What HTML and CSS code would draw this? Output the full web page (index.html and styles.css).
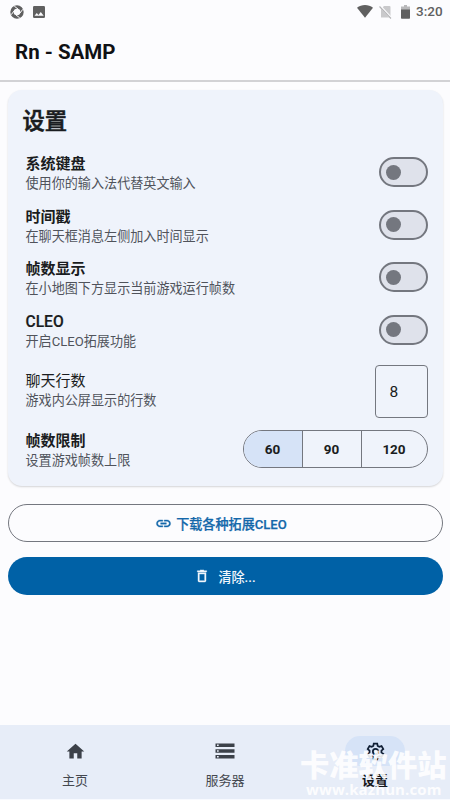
FILE: index.html
```html
<!DOCTYPE html>
<html lang="zh-CN">
<head>
<meta charset="utf-8">
<title>Rn - SAMP</title>
<link rel="stylesheet" href="styles.css">
</head>
<body>
<div class="screen">
  <div class="status">
    <svg class="sync" width="14" height="14" viewBox="0 0 14 14"><circle cx="7" cy="7" r="5" fill="none" stroke="#606060" stroke-width="3.4"/><path d="M4.3 1.2 8 4M12.8 4.3 10 8M9.7 12.8 6 10M1.2 9.7 4 6" stroke="#fcfcfe" stroke-width="1"/></svg>
    <svg class="photo" width="12" height="12" viewBox="0 0 12 12"><rect width="12" height="12" rx="1.2" fill="#606060"/><path d="M1.5 9.8 3.8 7l1.6 1.9L7.8 6l2.9 3.8z" fill="#fcfcfe"/></svg>
    <span class="grow"></span>
    <svg class="wifi" width="16" height="13" viewBox="0 0 16 13"><path d="M0 2.8C4.5-.9 11.500-.9 16 2.800L8 12.800z" fill="#606060"/></svg>
    <svg class="sim" width="13" height="14" viewBox="0 0 13 14"><path d="M5 1h5.500a1 1 0 0 1 1 1v10.500H2V4z" fill="#c9c9cb"/><path d="M1 1 12.500 13.500" stroke="#fcfcfe" stroke-width="2.400"/><path d="M.5 1.500 12 13.500" stroke="#b4b4b6" stroke-width="1.100"/></svg>
    <svg class="battery" width="9" height="14" viewBox="0 0 9 14"><path d="M3 0h3v1.500h3V5H0V1.500h3z" fill="#b8b8ba"/><path d="M0 4.500h9V13a.8.8 0 0 1-.8.8H.8A.8.8 0 0 1 0 13z" fill="#606060"/></svg>
    <span class="clock">3:20</span>
  </div>
  <header class="appbar">Rn - SAMP</header>
  <main>
    <section class="card">
      <h2>设置</h2>
      <div class="row"><div class="text"><div class="name">系统键盘</div><div class="desc">使用你的输入法代替英文输入</div></div><span class="switch"></span></div>
      <div class="row"><div class="text"><div class="name">时间戳</div><div class="desc">在聊天框消息左侧加入时间显示</div></div><span class="switch"></span></div>
      <div class="row"><div class="text"><div class="name">帧数显示</div><div class="desc">在小地图下方显示当前游戏运行帧数</div></div><span class="switch"></span></div>
      <div class="row"><div class="text"><div class="name latin">CLEO</div><div class="desc">开启CLEO拓展功能</div></div><span class="switch"></span></div>
      <div class="row lines"><div><div class="name plain">聊天行数</div><div class="desc">游戏内公屏显示的行数</div></div><span class="field">8</span></div>
      <div class="row limit"><div class="text"><div class="name">帧数限制</div><div class="desc">设置游戏帧数上限</div></div>
        <div class="segments"><span class="on">60</span><span>90</span><span>120</span></div></div>
    </section>
    <div class="button outline">
      <svg width="17" height="17" viewBox="0 0 24 24" fill="#1468aa" stroke="#1468aa" stroke-width=".5"><path d="M3.900 12c0-1.710 1.390-3.100 3.100-3.100h4V7H7c-2.760 0-5 2.240-5 5s2.240 5 5 5h4v-1.900H7c-1.710 0-3.100-1.390-3.100-3.100zM8 13h8v-2H8v2zm9-6h-4v1.900h4c1.710 0 3.100 1.390 3.100 3.100s-1.390 3.100-3.100 3.100h-4V17h4c2.760 0 5-2.240 5-5s-2.240-5-5-5z"/></svg>
      <span>下载各种拓展<b>CLEO</b></span>
    </div>
    <div class="button filled">
      <svg width="16" height="16" viewBox="0 0 24 24" fill="#f2f7fc" stroke="#f2f7fc" stroke-width=".6"><path d="M15.500 4l-1-1h-5l-1 1H5v2h14V4zM6 19a2 2 0 0 0 2 2h8a2 2 0 0 0 2-2V7H6zM8 9h8v10H8z"/></svg>
      <span>清除...</span>
    </div>
  </main>
  <nav>
    <div class="tab"><div class="pill"><svg width="21" height="21" viewBox="0 0 24 24" fill="#3c4149"><path d="M10 20v-6h4v6h5v-8h3L12 3 2 12h3v8z"/></svg></div><span>主页</span></div>
    <div class="tab"><div class="pill"><svg width="20" height="16" viewBox="0 0 20 16"><path d="M.5.500h19V4H.5zM.5 6.300h19v3.500H.5zM.5 12.100h19v3.500H.5z" fill="#3c4149"/><path d="M2 1.500h1.700V3H2zM2 7.300h1.700v1.500H2zM2 13.100h1.700v1.500H2z" fill="#e7edf8"/></svg></div><span>服务器</span></div>
    <div class="tab active"><div class="pill"><svg width="21" height="21" viewBox="0 0 24 24" fill="none" stroke="#101f35" stroke-width="2"><path d="M10 3h4l.5 2.700 1.800 1 2.600-.9 2 3.400-2.100 1.800v2l2.100 1.800-2 3.400-2.600-.9-1.800 1L14 21h-4l-.5-2.700-1.800-1-2.600.9-2-3.400L5.200 13v-2L3.100 9.200l2-3.400 2.600.9 1.800-1z"/><circle cx="12" cy="12" r="3"/></svg></div><span>设置</span></div>
  </nav>
  <div class="watermark"><div class="site">卡准软件站</div><div class="url">www.kazhun.com</div></div>
</div>
</body>
</html>
```
FILE: styles.css
```css
* { box-sizing: border-box; }
body { margin: 0; font-family: Roboto, "Noto Sans CJK SC", sans-serif; color: #1a1c20; }
svg { display: block; flex: none; }
.screen { position: relative; width: 450px; height: 800px; display: flex; flex-direction: column; background: #fcfcfe; overflow: hidden; }
.status { height: 23px; display: flex; align-items: center; padding: 0 7px 0 10px; flex: none; }
.photo { margin-left: 9px; }
.grow { flex: 1; }
.sim { margin-left: 6px; }
.battery { margin-left: 9px; }
.clock { margin-left: 6px; font-size: 13.5px; font-weight: 500; color: #606060; line-height: 23px; width: 27px; white-space: nowrap; }
.appbar { height: 59px; flex: none; padding: 0 15px; border-bottom: 2px solid #d2d2d5; font-size: 20.5px; line-height: 58px; font-weight: 700; color: #101114; }
main { flex: 1; padding: 8px 7.500px 0; }
.card { height: 396px; border-radius: 14px; background: #eff3fb; padding: 14px 15px 0 18px; box-shadow: 0 1px 2px rgba(0,0,0,.16); }
h2 { margin: 0 0 14px -3px; font-size: 22.3px; line-height: 34.500px; font-weight: 500; -webkit-text-stroke: .6px #1a1c20; }
.row { display: flex; justify-content: space-between; align-items: center; height: 39px; margin-bottom: 13.600px; white-space: nowrap; }
.text { padding-top: 3px; }
.name { font-size: 15px; line-height: 20px; font-weight: 700; }
.name.latin { font-size: 15.6px; font-weight: 500; -webkit-text-stroke: .2px #1a1c20; }
.name.plain { font-weight: 400; }
.desc { font-size: 13.100px; line-height: 19px; color: #50535b; }
.switch { width: 49px; height: 30px; border: 2px solid #74777f; border-radius: 15px; background: #dfe2eb; padding: 5.500px; }
.switch::before { content: ""; display: block; width: 15px; height: 15px; border-radius: 50%; background: #74777f; }
.row.lines { height: 53px; margin: 15.300px 0 11.500px; }
.row.lines > div { margin-top: -2px; }
.field { width: 53px; height: 53px; border: 1px solid #74777f; border-radius: 4px; padding-left: 14px; font-size: 15.500px; line-height: 53px; }
.row.limit { margin: 0; }
.segments { width: 185px; height: 38px; display: grid; grid-template-columns: 58px 59px 1fr; border: 1px solid #74777f; border-radius: 19px; overflow: hidden; font-size: 13.500px; font-weight: 700; line-height: 36px; text-align: center; }
.segments span + span { border-left: 1px solid #74777f; }
.segments .on { background: #d6e3f7; }
.button { height: 38px; border-radius: 19px; display: flex; align-items: center; justify-content: center; font-size: 13.100px; font-weight: 500; }
.outline { margin-top: 18px; border: 1px solid #74777f; color: #1468aa; gap: 4px; padding-right: 8px; -webkit-text-stroke: .25px #1468aa; }
.outline b { font-weight: 500; }
.filled { margin-top: 15px; background: #0061a6; color: #f2f7fc; gap: 8px; }
nav { height: 75px; flex: none; background: #e7edf8; display: grid; grid-template-columns: repeat(3, 1fr); padding-top: 11px; border-bottom: 1px solid #f8faff; }
.tab { display: flex; flex-direction: column; align-items: center; font-size: 13px; line-height: 20px; color: #44484f; }
.pill { width: 60px; height: 30px; border-radius: 15px; display: flex; align-items: center; justify-content: center; margin-bottom: 5px; }
.active { color: #15171b; font-weight: 700; }
.active .pill { background: #d6e3f7; }
.watermark { position: absolute; left: 300px; top: 743px; color: rgba(255,255,255,.88); font-weight: 900; white-space: nowrap; }
.site { font-family: "Noto Sans CJK SC", sans-serif; font-size: 29.300px; line-height: 40px; }
.url { font-family: "Open Sans", sans-serif; font-size: 15px; font-weight: 700; line-height: 12px; padding-left: 6px; letter-spacing: .1px; }
```
